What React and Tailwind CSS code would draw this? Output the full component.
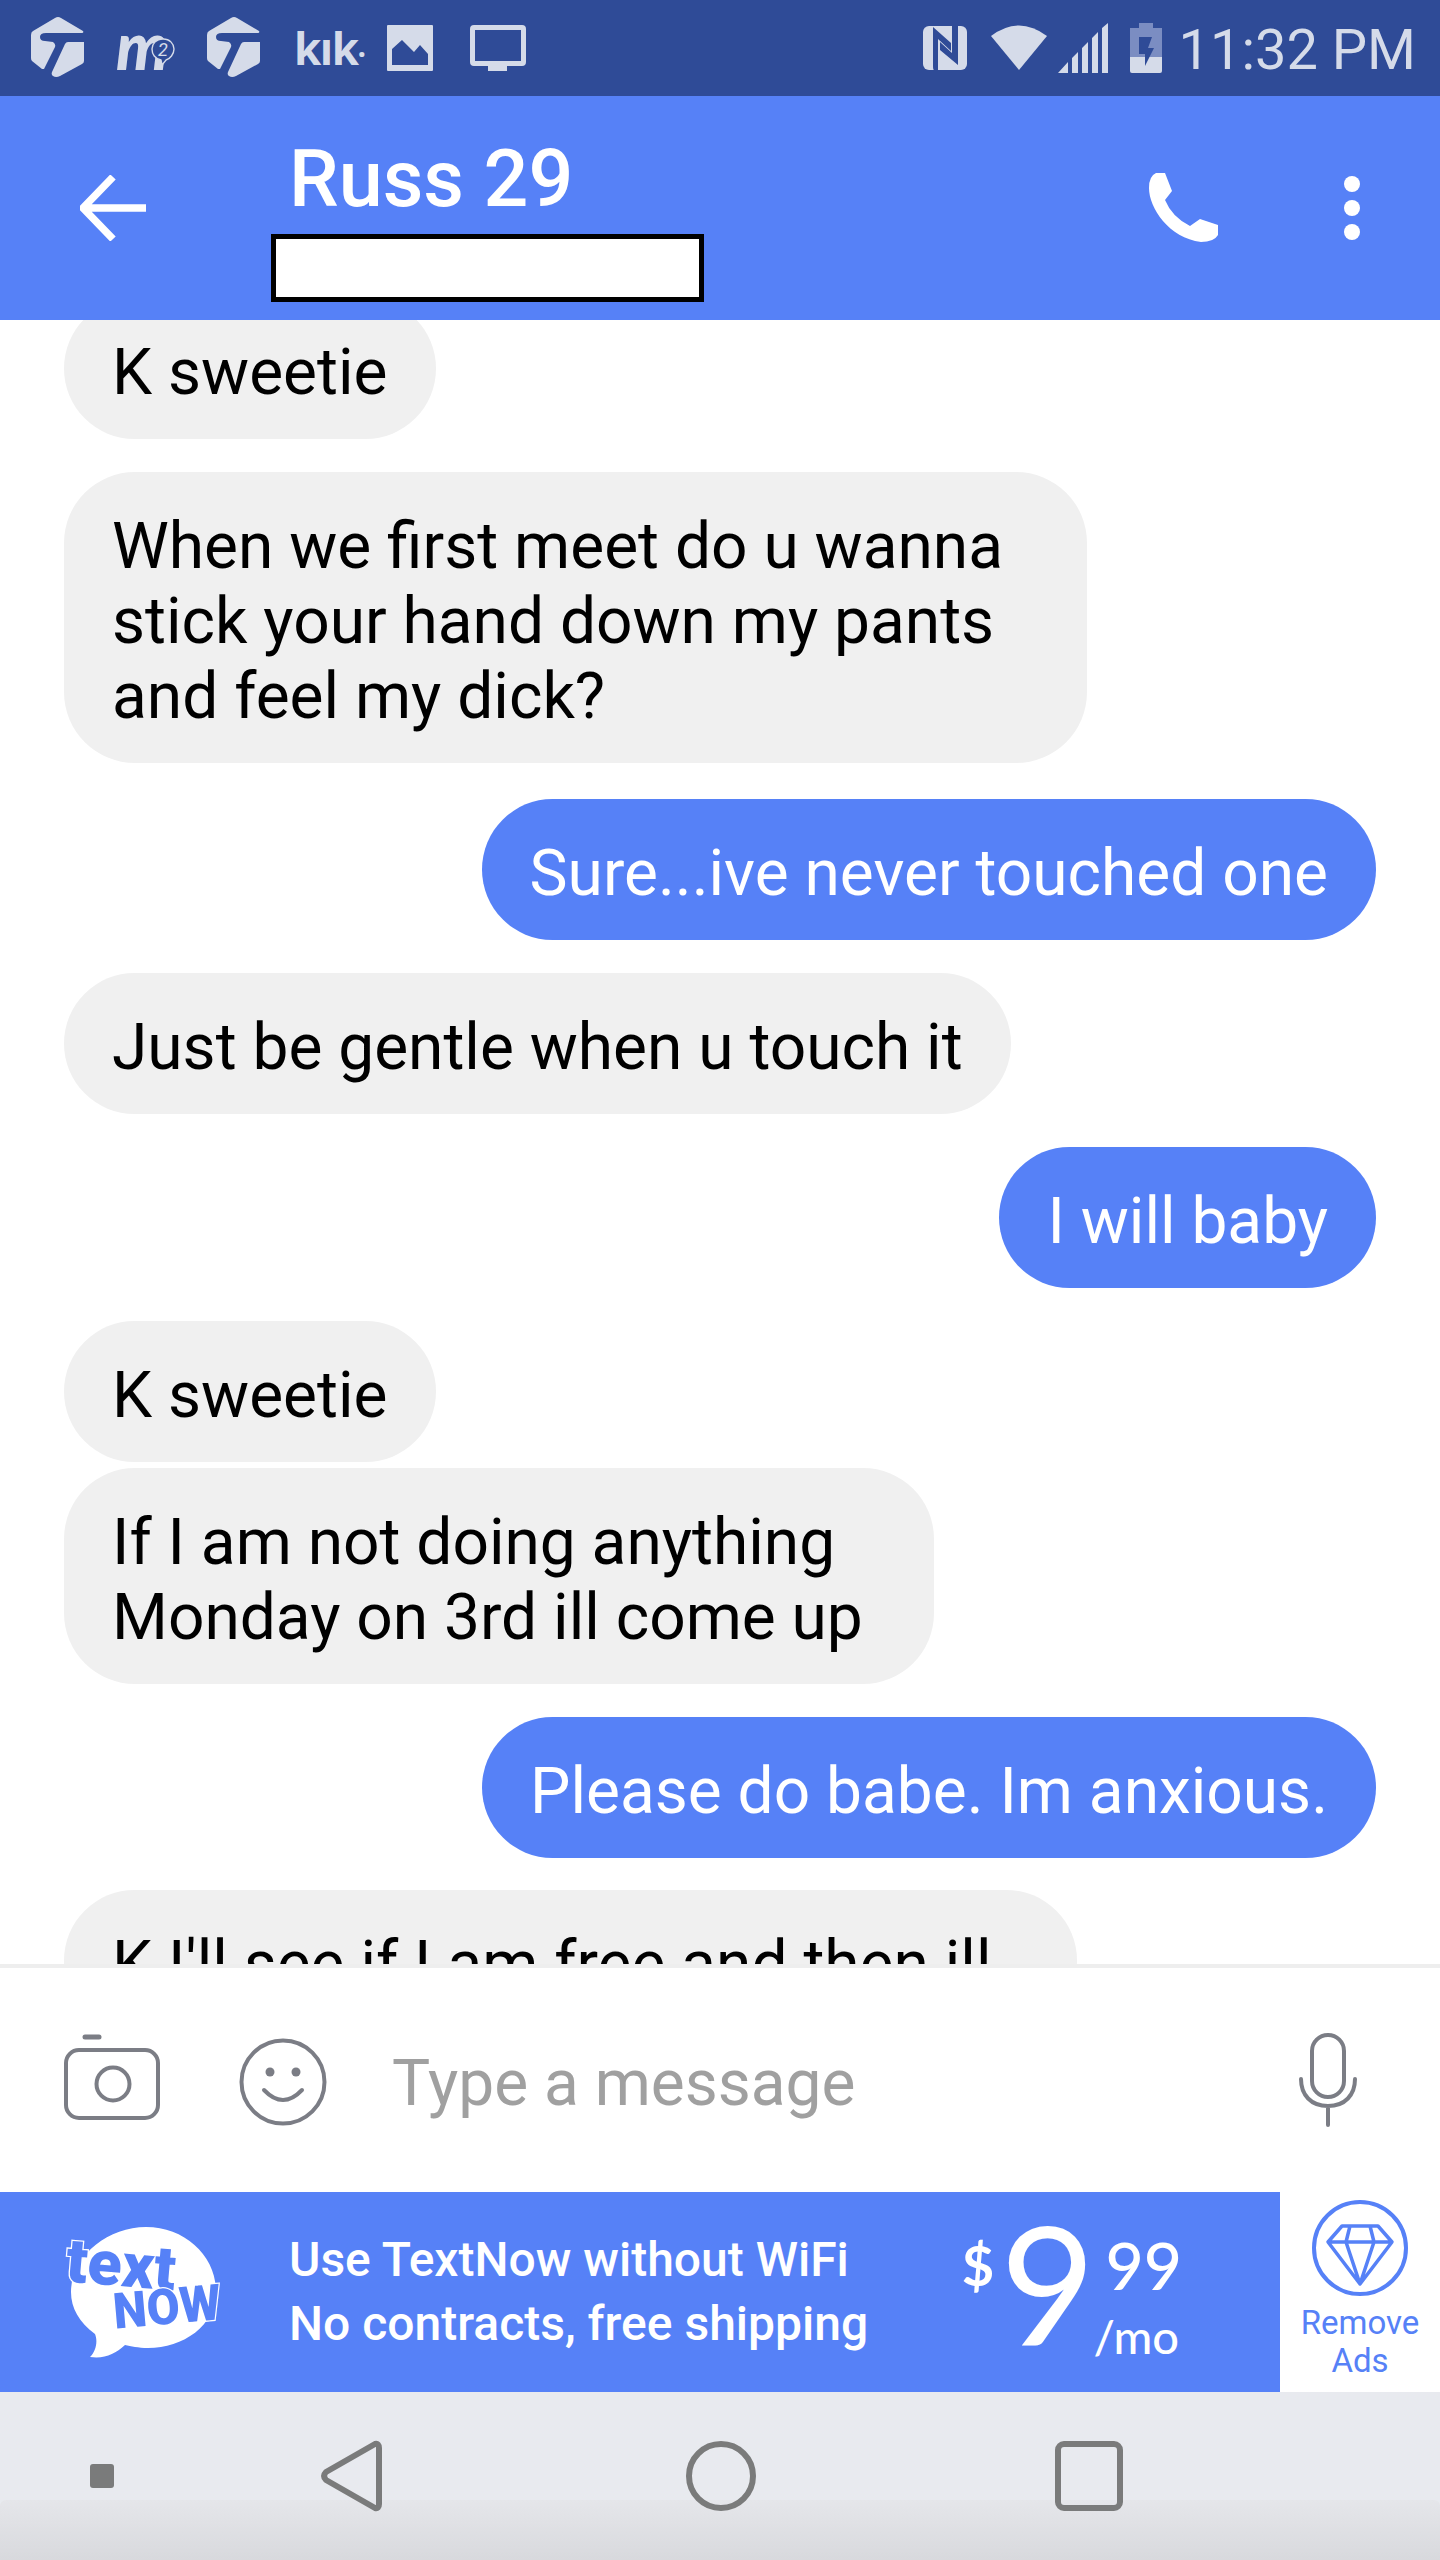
import React from "react";

const Tinder = () => (
  <svg width="53" height="60" viewBox="0 0 53 60" fill="#d5dbe9">
    <path d="M24 1 Q27 -1 30 1 L52 14 Q53 16 51 16 L15 16 Q9 16 9 20 Q9 24 14 24 L22 25 Q25 27 24 30 L13 52 L11 52 L1 44 Q0 43 0 41 L0 18 Q0 15 2 14 Z" />
    <path d="M37 25 L53 25 L53 44 Q53 46 51 47 L29 59 Q25 61 22 59 Q20 58 21 55 L34 27 Q35 25 37 25 Z" />
  </svg>
);

const Bubble = ({ mine, className = "", children }) => (
  <div
    className={`whitespace-nowrap rounded-[71px] px-[48px] pb-[29px] pt-[37px] text-[64px] leading-[75px] ${
      mine ? "w-fit self-end bg-[#5681f7] text-white" : "bg-[#f0f0f0] text-black"
    } ${className}`}
  >
    {children}
  </div>
);

export default function App() {
  return (
    <div className="flex h-[2560px] w-[1440px] flex-col overflow-hidden bg-white [font-family:Roboto,sans-serif]">
      {/* status bar */}
      <div className="flex h-24 shrink-0 items-start justify-between bg-[#2f4b97] text-[#d5dbe9]">
        <div className="flex items-start pl-[31px] pt-[17px]">
          <Tinder />
          <div className="ml-[32px] mt-[6px] flex w-[60px] items-start">
            <span className="text-[66px] font-black italic leading-[44px] tracking-[-2px] [font-family:Lato,sans-serif]">m</span>
            <svg width="24" height="28" viewBox="0 0 24 28" className="-ml-[16px] mt-[15px] shrink-0" fill="none" stroke="#d5dbe9" strokeWidth="1.4">
              <path d="M12 1 C19 1 23 6 23 11 C23 16 19 21 15 22 L11 27 L10 22 C4 21 1 16 1 11 C1 6 5 1 12 1 Z" fill="#2f4b97" />
              <text x="12" y="18" textAnchor="middle" fontSize="18" fontStyle="italic" fontFamily="Roboto" fill="#d5dbe9" stroke="none">2</text>
            </svg>
          </div>
          <div className="ml-[31px]"><Tinder /></div>
          <span className="ml-[34px] mt-[9px] w-[56px] whitespace-nowrap text-[44px] font-bold leading-[44px] tracking-[-1.5px] [font-family:'Open_Sans',sans-serif]">kık<span className="text-[30px]">·</span></span>
          <svg width="46" height="46" viewBox="0 0 46 46" className="ml-[37px] mt-[8px]" fill="#d5dbe9">
            <path fillRule="evenodd" d="M1 0 H45 Q46 0 46 1 V45 Q46 46 45 46 H1 Q0 46 0 45 V1 Q0 0 1 0 Z M5 40 H41 V29 L33 20 L27 27 L15 15 L5 24 Z" />
          </svg>
          <svg width="56" height="46" viewBox="0 0 56 46" className="ml-[37px] mt-[8px]" fill="#d5dbe9">
            <path fillRule="evenodd" d="M4 0 H52 Q56 0 56 4 V37 Q56 41 52 41 H37 V46 H18 V41 H4 Q0 41 0 37 V4 Q0 0 4 0 Z M5 5 V36 H51 V5 Z" />
          </svg>
        </div>
        <div className="flex items-start">
          <svg width="44" height="44" viewBox="0 0 44 44" className="mt-[26px]">
            <rect width="44" height="44" rx="6" fill="#d5dbe9" />
            <path d="M10 1 L28 17 V25 L15 13 V44 H11 Q10 44 10 40 Z M29 0 H35 V39 L17 24 V16 L29 27 Z" fill="#2f4b97" />
          </svg>
          <svg width="56" height="45" viewBox="0 0 56 45" className="ml-[24px] mt-[25px]" fill="#d5dbe9">
            <path d="M0 11 Q28 -10 56 11 L28 45 Z" />
          </svg>
          <svg width="50" height="50" viewBox="0 0 50 50" className="ml-[11px] mt-[23px]" fill="#d5dbe9">
            <path d="M0 50 L10 39 V50 Z M14 35 L20 29 V50 H14 Z M24 25 L30 19 V50 H24 Z M34 15 L40 9 V50 H34 Z M44 5 L50 0 V50 H44 Z" />
          </svg>
          <svg width="32" height="50" viewBox="0 0 32 50" className="ml-[22px] mt-[23px]">
            <path d="M9 0 H23 V5 H32 V34 H0 V5 H9 Z" fill="#7b8dc2" />
            <path d="M0 34 H32 V48 Q32 50 30 50 H2 Q0 50 0 48 Z" fill="#d5dbe9" />
            <path d="M9 14 H22 L18 25 H24 L15 43 V31 H9 Z" fill="#2f4b97" />
          </svg>
          <span className="ml-[16px] mr-[24px] mt-[22px] text-[56px] leading-[56px]">11:32 PM</span>
        </div>
      </div>

      {/* header */}
      <div className="flex h-[224px] shrink-0 items-start bg-[#5681f7] text-white">
        <svg width="66" height="66" viewBox="0 0 66 66" className="ml-[80px] mt-[79px]" fill="none" stroke="white" strokeWidth="7.5">
          <path d="M33 2 L3 33 L33 64 M3 33 H66" />
        </svg>
        <div className="ml-[125px] flex w-[433px] flex-col">
          <span className="ml-[18px] mt-[38px] text-[79px] font-medium leading-[90px]">Russ 29</span>
          <div className="mt-[10px] h-[68px] w-[433px] border-[5px] border-black bg-white" />
        </div>
        <svg width="69" height="70" viewBox="0 0 69 70" className="ml-[445px] mt-[77px]" fill="white">
          <path d="M7 0 H16 L23 18 L16 27 Q23 44 41 53 L51 46 L69 52 V62 Q65 69 52 69 C20 65 0 35 0 15 Q0 3 7 0 Z" />
        </svg>
        <div className="ml-[126px] mt-[80px] flex flex-col gap-2">
          <span className="size-4 rounded-full bg-white" />
          <span className="size-4 rounded-full bg-white" />
          <span className="size-4 rounded-full bg-white" />
        </div>
      </div>

      {/* messages */}
      <div className="flex h-[1644px] shrink-0 flex-col overflow-hidden px-[64px]">
        <Bubble className="-mt-[22px] w-[372px]">K sweetie</Bubble>
        <Bubble className="mt-[33px] w-[1023px]">When we first meet do u wanna<br />stick your hand down my pants<br />and feel my dick?</Bubble>
        <Bubble mine className="mt-[36px]">Sure...ive never touched one</Bubble>
        <Bubble className="mt-[33px] w-[947px]">Just be gentle when u touch it</Bubble>
        <Bubble mine className="mt-[33px]">I will baby</Bubble>
        <Bubble className="mt-[33px] w-[372px]">K sweetie</Bubble>
        <Bubble className="mt-[6px] w-[870px]">If I am not doing anything<br />Monday on 3rd ill come up</Bubble>
        <Bubble mine className="mt-[33px]">Please do babe. Im anxious.</Bubble>
        <Bubble className="mt-[32px] w-[1013px]">K I'll see if I am free and then ill</Bubble>
      </div>

      {/* input */}
      <div className="h-1 shrink-0 bg-[#eeeeee]" />
      <div className="flex h-[224px] shrink-0 items-start bg-white">
        <svg width="96" height="86" viewBox="0 0 96 86" className="ml-[64px] mt-[66px]" fill="none" stroke="#7b7d85" strokeWidth="4">
          <rect x="2" y="16" width="92" height="68" rx="13" />
          <circle cx="49" cy="50" r="16.5" />
          <path d="M21 3 H35" strokeWidth="5" strokeLinecap="round" />
        </svg>
        <svg width="88" height="88" viewBox="0 0 88 88" className="ml-[79px] mt-[70px]" fill="none" stroke="#7b7d85" strokeWidth="4">
          <circle cx="44" cy="44" r="41.5" />
          <circle cx="31" cy="34" r="4.5" fill="#7b7d85" stroke="none" />
          <circle cx="57" cy="34" r="4.5" fill="#7b7d85" stroke="none" />
          <path d="M25 52 Q44 72 63 52" strokeLinecap="round" />
        </svg>
        <span className="ml-[65px] mt-[78px] text-[64px] leading-[75px] text-[#a0a0a0]">Type a message</span>
        <svg width="58" height="94" viewBox="0 0 58 94" className="ml-auto mr-[83px] mt-[65px]" fill="none" stroke="#7b7d85" strokeWidth="4" strokeLinecap="round">
          <rect x="13" y="2" width="32" height="62" rx="16" />
          <path d="M2 46 C2 62 12 73 29 73 C46 73 56 62 56 46 M29 73 V92" />
        </svg>
      </div>

      {/* banner */}
      <div className="flex h-[200px] shrink-0">
        <div className="flex w-[1280px] items-start bg-[#5681f7] text-white">
          <svg width="160" height="134" viewBox="0 0 160 134" className="ml-[63px] mt-[34px] shrink-0 overflow-visible">
            <path d="M83 1 C122 1 153 30 153 65 C153 100 120 122 85 122 C75 122 68 120 62 119 C52 128 42 133 27 131 C33 125 35 115 32 108 C16 96 8 82 8 66 C8 30 45 1 83 1 Z" fill="white" />
            <g fontFamily="Roboto" fontWeight="900" fill="#5681f7" stroke="white" strokeWidth="2.5" paintOrder="stroke">
              <text x="3" y="60" fontSize="62" transform="rotate(5 58 40)" textLength="110" lengthAdjust="spacingAndGlyphs">text</text>
              <text x="50" y="98" fontSize="50" transform="rotate(-5 104 80)" textLength="108" lengthAdjust="spacingAndGlyphs">NOW</text>
            </g>
          </svg>
          <div className="ml-[66px] mt-[36px] flex flex-col whitespace-nowrap text-[48px] font-medium leading-[64px]">
            <span>Use TextNow without WiFi</span>
            <span>No contracts, free shipping</span>
          </div>
          <span className="ml-auto mt-[38px] text-[56px] font-bold leading-[70px] [font-family:Lato,sans-serif]">$</span>
          <span className="ml-[6px] mt-[12px] text-[164px] leading-[158px] [font-family:Lato,sans-serif]">9</span>
          <div className="ml-[2px] mr-[98px] mt-[40px] flex flex-col [font-family:Lato,sans-serif]">
            <span className="ml-[8px] text-[66px] font-medium leading-[66px]">99</span>
            <span className="-ml-[4px] mt-[10px] text-[47px] font-medium leading-[56px]">/mo</span>
          </div>
        </div>
        <div className="flex w-[160px] flex-col items-center bg-white pt-2 text-[#5681f7]">
          <svg width="96" height="96" viewBox="0 0 96 96" fill="none" stroke="#5681f7" strokeWidth="4">
            <circle cx="48" cy="48" r="46" />
            <path d="M30 26 H66 L80 42 L48 84 L16 42 Z M16 42 H80 M38 26 L34 42 L48 84 L62 42 L58 26" strokeWidth="3.5" strokeLinejoin="round" />
          </svg>
          <span className="mt-[8px] text-[33px] leading-[38px]">Remove</span>
          <span className="text-[33px] leading-[38px]">Ads</span>
        </div>
      </div>

      {/* nav */}
      <div className="relative flex h-[168px] shrink-0 items-start bg-[#e8eaef]">
        <div className="absolute inset-x-0 bottom-0 h-[60px] rounded-t-md bg-gradient-to-b from-[#e5e6ea] to-[#d8d9dd]" />
        <div className="relative ml-[90px] mt-[72px] h-[24px] w-[24px] rounded-[3px] bg-[#7a7b7b]" />
        <svg width="62" height="72" viewBox="0 0 62 72" className="relative ml-[206px] mt-[48px]" fill="none" stroke="#7a7b7b" strokeWidth="6" strokeLinejoin="round">
          <path d="M55 4 Q59 3 59 8 V64 Q59 69 55 68 L6 40 Q2 36 6 32 Z" />
        </svg>
        <svg width="70" height="72" viewBox="0 0 70 72" className="relative ml-[304px] mt-[48px]" fill="none" stroke="#7a7b7b" strokeWidth="6">
          <circle cx="35" cy="36" r="32" />
        </svg>
        <div className="relative ml-[299px] mt-[49px] h-[70px] w-[68px] rounded-[9px] border-[6px] border-[#7a7b7b]" />
      </div>
    </div>
  );
}
